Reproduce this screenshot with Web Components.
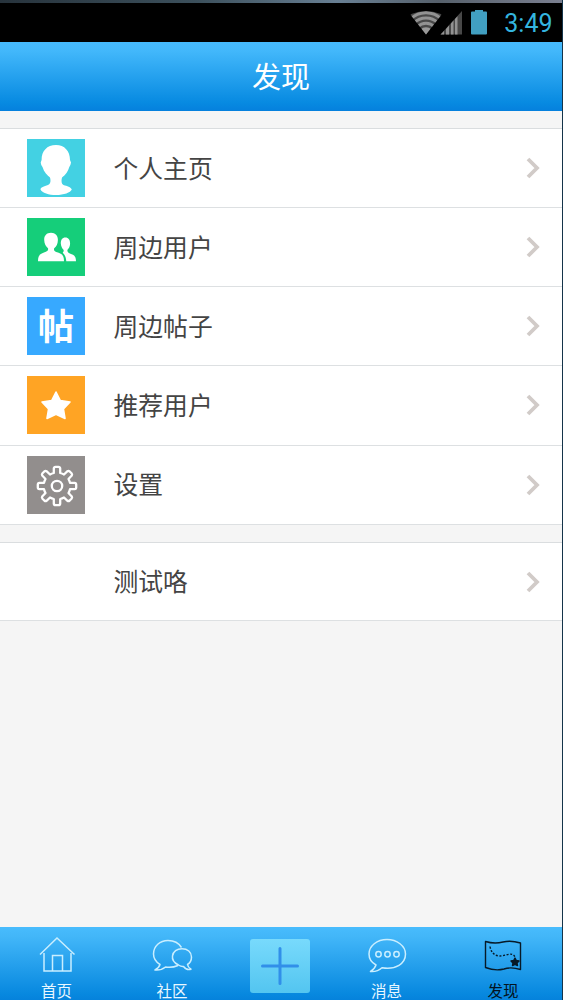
<!DOCTYPE html>
<html lang="zh-CN">
<head>
<meta charset="utf-8">
<title>发现</title>
<style>
html,body{margin:0;height:100%}
body{background:#f5f5f5;font-family:"Noto Sans CJK SC",sans-serif;overflow:hidden}
</style>
</head>
<body>
<discover-app></discover-app>

<template id="t-app">
<style>
:host{display:flex;flex-direction:column;width:563px;height:1000px;box-sizing:border-box;border-right:1px solid #14344a;background:#f5f5f5}
main{flex:1}
menu-group{margin-top:17px}
menu-group + menu-group{margin-top:17px}
</style>
<status-bar>3:49</status-bar>
<title-bar>发现</title-bar>
<main>
<menu-group>
<menu-row color="#43d1e3">
<svg slot="icon" viewBox="0 0 58 58" fill="#fff"><path d="M29 6C20 6 14.500 12 14.600 21L13.700 23.500Q14 26.500 15.500 28C17 33 20 36 23 38.500C24 42 23.500 45 21 46C17 47.200 13.500 48.500 13.500 50.500C15 54 22 56 29 56C37 56 43.500 53.500 44.800 50.500C44 48 40 47 36.500 46C34.500 45 34 42 35 38.500C39 35.500 41 32 42.300 28Q43.700 26 44 23.500L43 21C43 12 37.500 6 29 6Z"/></svg>个人主页</menu-row>
<menu-row color="#15ce7a">
<svg slot="icon" viewBox="0 0 58 58" fill="#fff"><path d="M24 14.700C19.500 14.700 17 17.700 17.200 22C17.300 26 19 28.500 21 30.300C21.600 32.500 20.500 33.500 17 34.500C12.500 36 11 38 11 43.300H37C37 38 35.500 36 31 34.500C27.500 33.500 26.500 32.500 27.200 30.300C29.500 28.500 30.800 26 30.900 22C31 17.700 28.500 14.700 24 14.700Z"/><path d="M38.300 19.500C35.200 19.500 33.700 22 33.800 25.500C34 28.500 35.300 30.500 36.500 31.700C37 33 36.500 34 35.700 34.700C37.700 36.500 39 39 39.300 43.300H49C49 39 47.500 37 44 36C41 35 40 33.500 40.500 31.700C42 30.300 43 28.500 43.100 25.500C43.100 22 41.500 19.500 38.300 19.500Z"/></svg>周边用户</menu-row>
<menu-row color="#37a9ff"><glyph-icon slot="icon">帖</glyph-icon>周边帖子</menu-row>
<menu-row color="#ffa424">
<svg slot="icon" viewBox="0 0 58 58"><path d="M29 16L33.300 24.500L43 26L36.400 33L38 42.500L29 38.300L20 42.500L21.600 33L15 26L24.700 24.500Z" fill="#fff" stroke="#fff" stroke-width="1.600" stroke-linejoin="round"/></svg>推荐用户</menu-row>
<menu-row color="#928e8d">
<svg slot="icon" viewBox="0 0 58 58" fill="none" stroke="#fff" stroke-width="2.300" stroke-linejoin="round"><g transform="translate(30 30)"><path d="M-3.200-13V-17.500Q-3-19.200-1.500-19.200H1.500Q3-19.200 3.200-17.500V-13Q5.200-12.500 7-11.500L10.500-14.800Q11.500-15.500 12.700-14.500L14.500-12.700Q15.500-11.500 14.800-10.500L11.500-7Q12.500-5.200 13-3.200H17.500Q19.200-3 19.200-1.500V1.500Q19.200 3 17.500 3.200H13Q12.500 5.200 11.500 7L14.800 10.500Q15.500 11.500 14.500 12.700L12.700 14.500Q11.500 15.500 10.500 14.800L7 11.500Q5.200 12.500 3.200 13V17.500Q3 19.200 1.500 19.200H-1.500Q-3 19.200-3.200 17.500V13Q-5.200 12.500-7 11.500L-10.500 14.800Q-11.500 15.500-12.700 14.500L-14.500 12.700Q-15.500 11.500-14.800 10.500L-11.500 7Q-12.500 5.200-13 3.200H-17.500Q-19.200 3-19.200 1.500V-1.500Q-19.200-3-17.500-3.200H-13Q-12.500-5.200-11.500-7L-14.800-10.500Q-15.500-11.500-14.500-12.700L-12.700-14.500Q-11.500-15.500-10.500-14.800L-7-11.500Q-5.200-12.500-3.200-13Z"/><circle r="5.200"/></g></svg>设置</menu-row>
</menu-group>
<menu-group><menu-row style="height:78.600px">测试咯</menu-row></menu-group>
</main>
<tab-bar>
<tab-item style="width:113px">
<svg slot="icon" width="42" height="42" viewBox="0 0 42 42" fill="none" stroke="#c9eeff" stroke-width="1.500"><path d="M4 20.500L21 4L38.500 20.500M8 19V37H35V19M16.500 37V21.500H26.500V37"/></svg>首页</tab-item>
<tab-item style="width:118px">
<svg slot="icon" width="42" height="42" viewBox="0 0 42 42" fill="none" stroke="#c9eeff" stroke-width="1.500" stroke-linejoin="round"><path d="M30.500 13.500C27.500 8.500 22.500 6.500 17 6.500C9 6.500 2.500 12 2.500 20C2.500 24.500 5 28 9 30.500C8.500 33 6.500 34.500 4 36C9 36.500 12 35 14.500 33C19 33.800 23.500 33 27 31.500M27.500 31C22.500 28.500 21 25 21.500 22C22 17.500 26 14.700 31 14.700C36.500 14.700 40.500 18 40.500 23C40.500 26.500 39 29 36.500 30.500C36.800 32.500 38 34 40 35.200C37 36.200 34 34.500 32.500 32.500C30.500 32.800 29 32 27.500 31Z"/></svg>社区</tab-item>
<tab-item plain style="width:98px">
<svg slot="icon" width="60" height="54" viewBox="0 0 60 54"><defs><linearGradient id="pg" x2="0" y2="1"><stop stop-color="#78dafc"/><stop offset="1" stop-color="#53c5f0"/></linearGradient></defs><rect width="60" height="54" rx="3" fill="url(#pg)"/><path d="M12.500 27H47.500M30 9.500V44.500" stroke="#318fe9" stroke-width="3" stroke-linecap="round"/></svg></tab-item>
<tab-item style="width:115px">
<svg slot="icon" width="42" height="42" viewBox="0 0 42 42" fill="none" stroke="#c9eeff" stroke-width="1.500" stroke-linejoin="round"><path d="M21 5.500C11 5.500 3 12 3 20C3 25 5.500 28.500 10 31C9 34 7 36 4.500 37.500C10 38 13 36.500 16 33.700C30 36 39.500 29.500 39.500 20C39.500 12 31 5.500 21 5.500Z"/><circle cx="12.500" cy="20.300" r="2.700"/><circle cx="21.500" cy="20.300" r="2.700"/><circle cx="30.500" cy="20.300" r="2.700"/></svg>消息</tab-item>
<tab-item active style="width:118px">
<svg slot="icon" width="42" height="42" viewBox="0 0 42 42" fill="none" stroke="#071a28" stroke-width="1.400" stroke-linejoin="round"><path d="M3.500 7.500C10 9.500 15 9.500 21 8C27 6.500 32 7 38.500 9V35.500C32 33.500 28 33 22 35C16 36.500 10 36 3.500 33.500Z"/><path d="M8 12.500Q9.500 21 17 22C23 22.500 30 17 33 23" stroke-dasharray="2 1.600"/><path d="M33 24L34.300 26.500L37 27L35 29L35.500 31.500L33 30.300L30.500 31.500L31 29L29 27L31.700 26.500Z" fill="#071a28"/></svg>发现</tab-item>
</tab-bar>
</template>

<template id="t-status">
<style>
:host{display:flex;flex-direction:column;height:42px;background:#000;color:#34b4df;font:25px/42px Roboto,sans-serif}
.edge{height:3px;flex:none;background:linear-gradient(90deg,#27333c,#3c505c 35%,#687f93 60%,#56606b 78%,#7a7f90)}
.tray{display:flex;justify-content:flex-end;height:39px;padding-right:9.500px}
svg{flex:none;margin-right:12.500px}
</style>
<div class="edge"></div>
<div class="tray">
<svg width="82" height="39" viewBox="0 0 82 39"><defs><clipPath id="fan"><path d="M1.500 13Q-.5 11.500 2 10.800Q16 5 30 10.800Q32.500 11.500 30.500 13L16 31.500Z"/></clipPath></defs>
<g clip-path="url(#fan)"><rect y="5" width="34" height="28" fill="#484848"/><g fill="none" stroke="#929292" stroke-width="2.900"><circle cx="16" cy="32" r="22.300"/><circle cx="16" cy="32" r="17"/><circle cx="16" cy="32" r="11.800"/></g><circle cx="16" cy="32" r="7.800" fill="#999"/></g>
<path d="M30.500 31.500L52 8V31.500Z" fill="#484848"/><path d="M30.500 31.500L34 28V31.500ZM36 26L39 22.500V31.500H36ZM41 20.500L43.500 17.600V31.500H41ZM45 16L47.500 13.300V31.500H45Z" fill="#929292"/>
<path d="M61 9.500Q61 8.500 62 8.500H65V7H73V8.500H76Q77 8.500 77 9.500V30.500Q77 31.500 76 31.500H62Q61 31.500 61 30.500Z" fill="#419fc1"/></svg>
<slot></slot></div>
</template>

<template id="t-title">
<style>
:host{display:block;height:69px;background:linear-gradient(#46bafd,#43b8fb 12%,#078ae1 88%,#0580dd);color:#fff;text-align:center;font-size:29px;line-height:66px}
</style><slot></slot>
</template>

<template id="t-group">
<style>
:host{display:block;background:#fff;border-top:1px solid #dadddf}
</style><slot></slot>
</template>

<template id="t-row">
<style>
:host{display:flex;align-items:center;box-sizing:border-box;height:79.150px;padding:0 22.500px 0 27px;border-bottom:1px solid #dde0e2;color:#444;font-size:24.800px;line-height:74px}
.tile{flex:none;width:58px;height:58px;margin-right:28.500px;background:var(--tile,transparent)}
.label{flex:1;white-space:nowrap;padding-bottom:3px}
::slotted(svg),::slotted(glyph-icon){display:block;width:58px;height:58px}
</style>
<div class="tile"><slot name="icon"></slot></div><div class="label"><slot></slot></div>
<svg width="14" height="22" viewBox="0 0 14 22" fill="none" stroke="#d1cbc8" stroke-width="3.800"><path d="M2 2L11 11L2 20"/></svg>
</template>

<template id="t-glyph">
<style>
:host{display:block;color:#fff;font-size:36px;font-weight:700;line-height:55px;text-align:center}
</style><slot></slot>
</template>

<template id="t-tabs">
<style>
:host{display:flex;flex:none;height:73px;background:linear-gradient(#48bcfd,#43b7f9 12%,#0788df 92%,#0582dc)}
</style><slot></slot>
</template>

<template id="t-tab">
<style>
:host{display:flex;flex:none;flex-direction:column;align-items:center;box-sizing:border-box;padding-top:7px;color:#e9f7ff;font-size:15.500px;line-height:24px}
:host([plain]){padding-top:12px}
:host([active]){color:#031320}
::slotted(svg){display:block;flex:none}
.label{margin-top:2px;white-space:nowrap}
</style>
<slot name="icon"></slot><div class="label"><slot></slot></div>
</template>

<script>
function define(name, templateId, setup) {
  customElements.define(name, class extends HTMLElement {
    constructor() {
      super();
      this.attachShadow({ mode: "open" }).append(
        document.getElementById(templateId).content.cloneNode(true));
    }
    connectedCallback() { if (setup) setup(this); }
  });
}
define("status-bar", "t-status");
define("title-bar", "t-title");
define("menu-group", "t-group");
define("glyph-icon", "t-glyph");
define("menu-row", "t-row", el => {
  const color = el.getAttribute("color");
  if (color) el.style.setProperty("--tile", color);
});
define("tab-item", "t-tab");
define("tab-bar", "t-tabs");
define("discover-app", "t-app");
</script>
</body>
</html>
